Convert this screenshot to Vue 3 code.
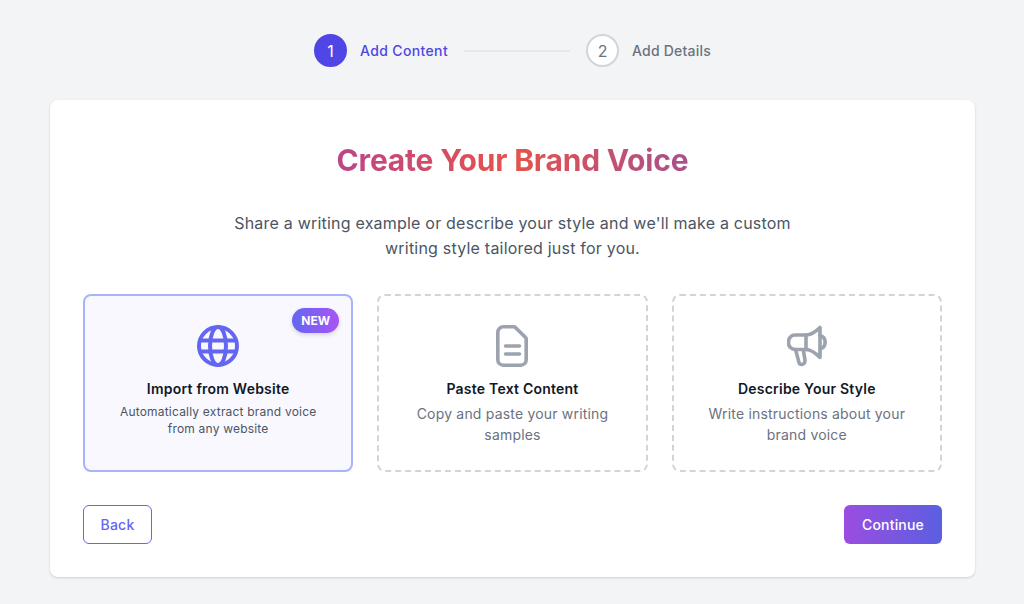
<template>
  <div class="page">
    <div class="steps">
      <div class="step active">
        <span class="step-num">1</span>
        <span class="step-label">Add Content</span>
      </div>
      <div class="step-line"></div>
      <div class="step">
        <span class="step-num">2</span>
        <span class="step-label">Add Details</span>
      </div>
    </div>

    <div class="panel">
      <h1 class="title">Create Your Brand Voice</h1>
      <p class="subtitle">
        Share a writing example or describe your style and we'll make a custom<br />
        writing style tailored just for you.
      </p>

      <div class="options">
        <div class="option selected">
          <span class="badge">NEW</span>
          <svg class="icon" viewBox="0 0 42 42" fill="none" stroke="currentColor" stroke-width="4">
            <circle cx="21" cy="21" r="19" />
            <ellipse cx="21" cy="21" rx="8" ry="19" />
            <path d="M3 15.500h36M3 26.500h36" />
          </svg>
          <h3>Import from Website</h3>
          <p>Automatically extract brand voice<br />from any website</p>
        </div>
        <div class="option">
          <svg class="icon" viewBox="0 0 42 42" fill="none" stroke="currentColor" stroke-width="3.6" stroke-linecap="round" stroke-linejoin="round">
            <path d="M12.300 1.800h10.700a2 2 0 0 1 1.400.6l10.200 10.200a2 2 0 0 1 .6 1.400v20.700a5.500 5.500 0 0 1-5.500 5.500H12.300a5.500 5.500 0 0 1-5.500-5.500V7.300a5.500 5.500 0 0 1 5.500-5.500z" />
            <path d="M14.500 21h14M14.500 29h14" />
          </svg>
          <h3>Paste Text Content</h3>
          <p class="muted">Copy and paste your writing<br />samples</p>
        </div>
        <div class="option">
          <svg class="icon icon-mega" viewBox="0 0 42 42" fill="none" stroke="currentColor" stroke-width="3.6" stroke-linecap="round" stroke-linejoin="round">
            <path d="M33 2.500v30c-4-4-9-8-14-8H8a6.500 6.500 0 0 1-6.500-6.500v-1.500A6.500 6.500 0 0 1 8 10h11c5 0 10-3.500 14-7.500z" />
            <path d="M19 10v14.500" />
            <path d="M33 10.500a7 7 0 0 1 0 13.500" />
            <path d="M8.500 24.500l3.500 13a2.800 2.800 0 0 0 2.800 2 3.500 3.500 0 0 0 3.200-3.500c0-3.500-1.500-7-1.500-11" />
          </svg>
          <h3>Describe Your Style</h3>
          <p class="muted">Write instructions about your<br />brand voice</p>
        </div>
      </div>

      <div class="actions">
        <button class="btn-back">Back</button>
        <button class="btn-continue">Continue</button>
      </div>
    </div>
  </div>
</template>

<script setup>
</script>

<style>
html,
body {
  margin: 0;
  background: #f3f4f6;
}
</style>

<style scoped>
.page {
  height: 604px;
  box-sizing: border-box;
  padding: 34px 49px 0 50px;
  background: #f3f4f6;
  font-family: Inter, "Liberation Sans", sans-serif;
  overflow: hidden;
}

.steps {
  display: flex;
  align-items: center;
  justify-content: center;
  height: 33px;
  margin-bottom: 33px;
}

.step {
  display: flex;
  align-items: center;
  gap: 13px;
}

.step-num {
  width: 33px;
  height: 33px;
  box-sizing: border-box;
  border-radius: 50%;
  border: 2px solid #d1d5db;
  background: #fff;
  color: #6b7280;
  font-size: 16px;
  display: flex;
  align-items: center;
  justify-content: center;
}

.step-label {
  font-size: 14px;
  font-weight: 500;
  letter-spacing: 0.22px;
  color: #6b7280;
}

.step.active .step-num {
  background: #4f46e5;
  border-color: #4f46e5;
  color: #fff;
}

.step.active .step-label {
  letter-spacing: 0.36px;
  color: #4f46e5;
}

.step-line {
  width: 106px;
  height: 2px;
  background: #e5e7eb;
  margin: 0 16px;
}

.panel {
  height: 477px;
  box-sizing: border-box;
  background: #fff;
  border-radius: 8px;
  box-shadow: 0 1px 3px rgba(0, 0, 0, 0.1), 0 1px 2px rgba(0, 0, 0, 0.06);
  padding: 41px 33px 33px;
  display: flex;
  flex-direction: column;
}

.title {
  margin: 0;
  font-size: 30px;
  line-height: 38px;
  font-weight: 700;
  text-align: center;
  letter-spacing: -0.2px;
  background: linear-gradient(90deg, #bb4589 0%, #e5534b 50%, #a8508f 100%);
  -webkit-background-clip: text;
  background-clip: text;
  color: transparent;
  width: 352px;
  align-self: center;
  white-space: nowrap;
}

.subtitle {
  margin: 32px 0 0;
  font-size: 16px;
  line-height: 25px;
  letter-spacing: 0.21px;
  color: #4b5563;
  text-align: center;
}

.options {
  display: grid;
  grid-template-columns: repeat(3, 1fr);
  gap: 24px;
  margin-top: 33px;
}

.option {
  position: relative;
  height: 178px;
  box-sizing: border-box;
  border: 2px dashed #d1d5db;
  border-radius: 8px;
  padding: 29px 16px 0;
  display: flex;
  flex-direction: column;
  align-items: center;
  text-align: center;
  color: #9ca3af;
}

.option.selected {
  border: 2px solid #a5b4fc;
  background: #f9f8ff;
  color: #6366f1;
}

.icon {
  width: 42px;
  height: 42px;
  flex-shrink: 0;
}

.icon-mega {
  margin-left: 2px;
}

.option h3 {
  margin: 10px 0 0;
  font-size: 14px;
  line-height: 24px;
  font-weight: 600;
  letter-spacing: 0.22px;
  color: #111827;
}

.option p {
  margin: 2px 0 0;
  font-size: 12px;
  line-height: 17px;
  letter-spacing: 0.2px;
  color: #4b5563;
}

.option p.muted {
  margin-top: 2px;
  font-size: 14px;
  line-height: 21px;
  letter-spacing: 0.19px;
  color: #6b7280;
}

.badge {
  position: absolute;
  top: 12px;
  right: 12px;
  padding: 0 9px;
  height: 25px;
  line-height: 25px;
  border-radius: 13px;
  font-size: 12px;
  font-weight: 700;
  letter-spacing: 0.1px;
  color: #fff;
  background: linear-gradient(90deg, #6366f1, #a855f7);
  box-shadow: 0 2px 4px rgba(0, 0, 0, 0.15);
}

.actions {
  display: flex;
  justify-content: space-between;
  margin-top: 33px;
}

.actions button {
  height: 39px;
  border-radius: 6px;
  font-family: inherit;
  font-size: 14px;
  font-weight: 500;
  letter-spacing: 0.2px;
}

.btn-back {
  width: 69px;
  background: #fff;
  border: 1px solid #6366f1;
  color: #6366f1;
}

.btn-continue {
  width: 98px;
  border: none;
  color: #fff;
  background: linear-gradient(90deg, #9b4de0, #5b5fe0);
}
</style>
